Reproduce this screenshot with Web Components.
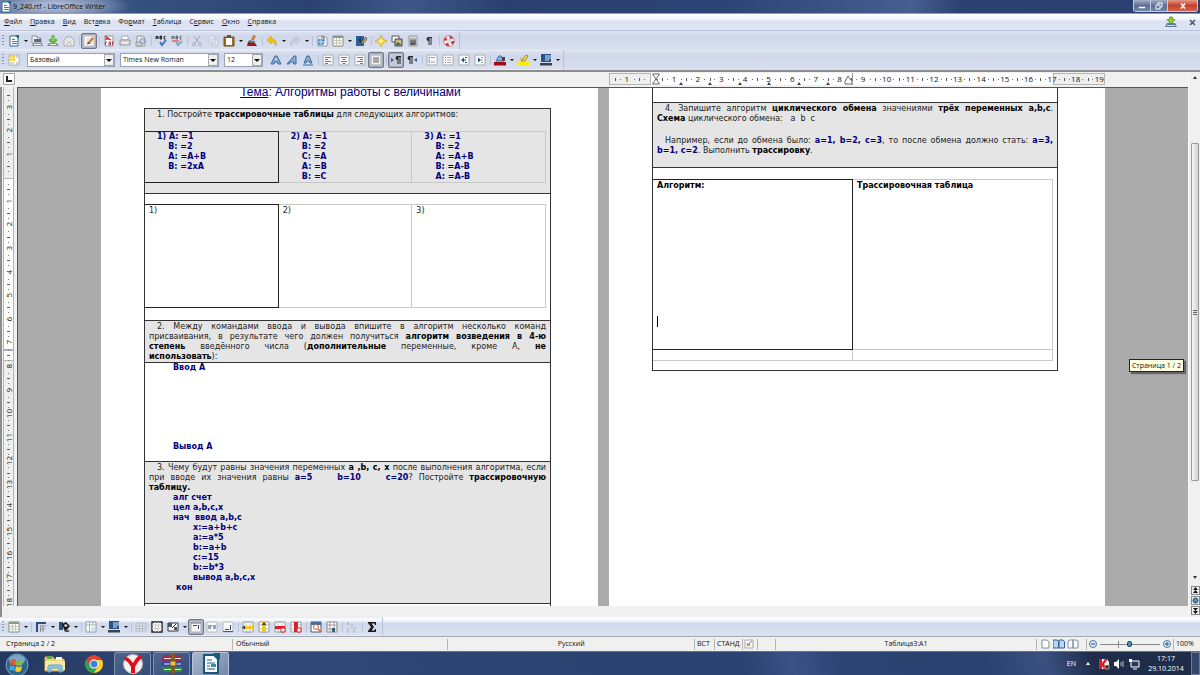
<!DOCTYPE html>
<html lang="ru">
<head>
<meta charset="utf-8">
<title>9_240.rtf - LibreOffice Writer</title>
<style>
html, body { margin: 0; height: 100%; overflow: hidden; }
body { font: 7px/10px "Open Sans", "Noto Sans", sans-serif; color: #111; }
</style>
</head>
<body>
<writer-app></writer-app>
<script>
const ICONS = {
  doc: '<path d="M2 1h6l2 2v8H2z" fill="#fff" stroke="#2f6c93"/><path d="M7 0h4v4z" fill="#1f6f9a"/><path d="M4 4h3v1H4zM4 6h5v1H4zM4 8h5v1H4z" fill="#3b7ea6"/>',
  open: '<path d="M1 1h5v2h4v5H1z" fill="#f4f4f4" stroke="#8b93a1"/><path d="M3 4h7v3H3z" fill="#5f6a7c"/><path d="M2 8h9l1 3H1z" fill="#8b93a1"/><path d="M3 9.500h7" stroke="#fff"/>',
  save: '<path d="M2 8h8l2 3H0z" fill="#8d939c"/><path d="M3 9.500h6" stroke="#eee"/><path d="M5 0h2l1 4h2v2L6 9 2 6V4h2z" fill="#58b832"/><path d="M5.500 2h1l.5 4H5z" fill="#a4e072"/>',
  mail: '<path d="M1 5l3-3h4l3 3v6H1z" fill="#eee" stroke="#aaa"/><path d="M3 10l3-3 3 3" fill="none" stroke="#b5b5b5"/><path d="M4 5h4v2H4z" fill="#fff" stroke="#bbb" stroke-width=".6"/>',
  edit: '<path d="M1 1h10v10H1z" fill="#fff" stroke="#bbb"/><path d="M3 4h4M3 6h3M3 8h6" stroke="#ccc"/><path d="M5 7l4-5 2 1.500-4 5z" fill="#f07c1c"/><path d="M4 9.500l1-2.500 2 1.500z" fill="#333"/>',
  pdf: '<path d="M2 1h8v10H2z" fill="#fff" stroke="#999"/><path d="M2 1l6 4M2 4h4" stroke="#c9302c" stroke-width="1.500"/><path d="M2.500 10V7H4M6 7v3h1.500V7zM9.500 10V7H11" stroke="#944" fill="none"/>',
  print: '<path d="M3 1h6v4H3z" fill="#fff" stroke="#aaa"/><path d="M1 5h10v5H1z" fill="#d8d8d8" stroke="#999"/><path d="M3 8h6" stroke="#fff"/>',
  preview: '<path d="M2 1h6l2 2v8H2z" fill="#e8e8e8" stroke="#999"/><path d="M1 7h6v4H1z" fill="#d0d0d0" stroke="#999"/><circle cx="7.500" cy="6" r="2.500" fill="#bfd6ea" stroke="#7a93ad"/>',
  abc: '<path d="M1 4V1.500h2V4M1 3h2M5 4V1h1.500v3zM5 2.500h1.500M10.500 1.500H9V4h1.500" stroke="#222" fill="none"/><path d="M5 7l2 3 4-5" stroke="#3d76b8" stroke-width="2" fill="none"/>',
  abc2: '<path d="M1 4V1.500h2V4M1 3h2M5 4V1h1.500v3zM5 2.500h1.500M10.500 1.500H9V4h1.500" stroke="#666" fill="none"/><path d="M1 6h7" stroke="#d66" stroke-width="1.500"/><path d="M5 7l2 3 4-4" stroke="#7fa5d0" stroke-width="2" fill="none"/>',
  cut: '<path d="M3 1l5 7M9 1L4 8" stroke="#a3a9b8" fill="none"/><circle cx="3" cy="9.500" r="1.500" fill="none" stroke="#a3a9b8"/><circle cx="9" cy="9.500" r="1.500" fill="none" stroke="#a3a9b8"/>',
  copy: '<path d="M2 1h6v8H2zM5 4h6v7H5z" fill="#e4e6ee" stroke="#c3c7d4"/>',
  paste: '<path d="M1 2h10v9H1z" fill="#a86f1b" stroke="#7a4e12"/><path d="M3 3h6v7H3z" fill="#fff"/><path d="M4 0h4v3H4z" fill="#555"/>',
  brush: '<path d="M7 0l3 1-2 4H5z" fill="#c97a45"/><path d="M3 5l6 1v2L2 7z" fill="#777"/><path d="M2 7l7 1 2 3H1z" fill="#333"/><path d="M2 9.500h8" stroke="#b22"/>',
  undo: '<path d="M1 5l4-4v2.500c4 0 6 3 5 7.500C9 8 8 7 5 7v2z" fill="#f3c512" stroke="#c99c10" stroke-width=".6"/>',
  redo: '<path d="M11 5L7 1v2.500C3 3.500 1 6.500 2 11 3 8 4 7 7 7v2z" fill="#c9cedb" stroke="#b4bac9" stroke-width=".6"/>',
  link: '<path d="M2 1h6l3 2v8H2z" fill="#fff" stroke="#9a9a9a"/><circle cx="5" cy="7" r="3.500" fill="#5b8fc4"/><path d="M2 7h6M5 4v6" stroke="#cfe2f5"/><path d="M5 2h3v4" stroke="#2f5f93" fill="none"/>',
  table: '<path d="M1 1h10v10H1z" fill="#fff" stroke="#8b8b7c"/><path d="M1 1h10v2H1z" fill="#8f968c"/><path d="M1 5.500h10M1 8h10M4.500 3v8M7.500 3v8" stroke="#c4c8b8"/>',
  draw: '<path d="M1 1h8v10H1z" fill="#2f5f93"/><path d="M3 5l3-3v6z" fill="#1b3958"/><path d="M6 8l5-6 1 2-4 5z" fill="#d7a45a" stroke="#333" stroke-width=".6"/>',
  star: '<path d="M6 0l2 4 4 2-4 2-2 4-2-4-4-2 4-2z" fill="#f5d23a" stroke="#c9a21c" stroke-width=".6"/><path d="M6 3l1 2 2 1-2 1-1 2-1-2-2-1 2-1z" fill="#fff6b5"/>',
  gallery: '<path d="M1 1h7v6H1z" fill="#fff" stroke="#555"/><path d="M4 4h7v7H4z" fill="#c9b68a" stroke="#444"/><path d="M5 9l2-2 3 3H5z" fill="#3c6b3a"/>',
  db: '<path d="M2 1h8v10H2z" fill="#ddd" stroke="#999"/><path d="M3 4h6v5H3z" fill="#777"/><ellipse cx="6" cy="4" rx="3" ry="1.300" fill="#aaa"/><ellipse cx="6" cy="9" rx="3" ry="1.200" fill="#555"/>',
  para: '<path d="M5.500 2H9v1h-.5v7h-1V3h-1v7h-1V6C3 6 3 2 5.500 2z" fill="#2b2b3c"/>',
  help: '<circle cx="6" cy="6" r="4" fill="none" stroke="#fff" stroke-width="2.500"/><circle cx="6" cy="6" r="4" fill="none" stroke="#d2332b" stroke-width="2.500" stroke-dasharray="3.140 3.140"/><circle cx="6" cy="6" r="5.300" fill="none" stroke="#a3473f" stroke-width=".6"/>',
  styles: '<path d="M1 1h10v10H1z" fill="#fff" stroke="#aaa"/><path d="M1 1h6v6H1z" fill="#f2cf2c"/><path d="M8 1h3v3H8zM8 8h3v3H8zM1 8h5v3H1z" fill="#cdcdcd"/><path d="M1 4h10M4 1v10M7.500 1v10M1 7.500h10" stroke="#fff" stroke-width=".6"/>',
  bold: '<path d="M1 10L5 2h2l4 8H8L7.500 8h-3L4 10z" fill="#86aed8" stroke="#38689c"/><path d="M5 6h2L6 4z" fill="#fff"/>',
  ital: '<path d="M1 10L8 2h2v8H7.500V8h-3L3 10z" fill="#86aed8" stroke="#38689c"/>',
  under: '<path d="M2 9l3-7h2l3 7H8L7 7H5L4 9z" fill="#86aed8" stroke="#38689c"/><path d="M1 11h10" stroke="#38689c"/>',
  al: '<path d="M1 1h10v10H1z" fill="#fafafa" stroke="#aaa"/><path d="M3 3.500h6M3 5.500h3M3 7.500h6M3 9.500h3" stroke="#777"/>',
  ac: '<path d="M1 1h10v10H1z" fill="#fafafa" stroke="#aaa"/><path d="M3 3.500h6M4.500 5.500h3M3 7.500h6M4.500 9.500h3" stroke="#777"/>',
  ar: '<path d="M1 1h10v10H1z" fill="#fafafa" stroke="#aaa"/><path d="M3 3.500h6M6 5.500h3M3 7.500h6M6 9.500h3" stroke="#777"/>',
  aj: '<path d="M1 1h10v10H1z" fill="#f0f0f0" stroke="#aaa"/><path d="M3 3h6v6H3z" fill="#a9a9a9"/>',
  ltr: '<path d="M1 4l3 2-3 2z" fill="#2f5f93"/><path d="M7.500 2h3.500v1h-.5v7h-1V3h-1v7h-1V6C5 6 5 2 7.500 2z" fill="#222"/>',
  rtl: '<path d="M11 4L8 6l3 2z" fill="#2f5f93"/><path d="M3.500 2H7v1h-.5v7h-1V3h-1v7h-1V6C1 6 1 2 3.500 2z" fill="#222"/>',
  num: '<path d="M1 1h10v10H1z" fill="#fafafa" stroke="#aaa"/><path d="M5 3.500h4M5 8h4" stroke="#999"/><path d="M2.500 3.500h1.500M2.500 6h1.500M2.500 8h1.500" stroke="#2f6fb0"/>',
  bul: '<path d="M1 1h10v10H1z" fill="#fafafa" stroke="#aaa"/><path d="M5 3.500h4M5 6h4M5 8.500h4" stroke="#999" stroke-width=".8"/><path d="M3 3.500h1M3 6h1M3 8.500h1" stroke="#777"/>',
  outd: '<path d="M1 1h10v10H1z" fill="#fafafa" stroke="#aaa"/><path d="M3 6l3-2.500v5z" fill="#1e4f86"/><path d="M6 6h2M7 3.500h2M7 8.500h2" stroke="#1e4f86"/>',
  ind: '<path d="M1 1h10v10H1z" fill="#fafafa" stroke="#aaa"/><path d="M7 6L4 3.500v5z" fill="#1e4f86"/><path d="M7 3.500h2M7 6h2M7 8.500h2" stroke="#999"/>',
  fcol: '<path d="M2 7l3-5h2l3 5z" fill="#86aed8" stroke="#38689c"/><path d="M8 3h3v4H8z" fill="#444"/><path d="M0 8h12v3.500H0z" fill="#a30c14"/>',
  hcol: '<path d="M4 7l5-6 2 1-3 5z" fill="#f3d35e" stroke="#8a7322" stroke-width=".7"/><path d="M3 4l5 3" stroke="#c99c10"/><path d="M0 8h12v3.500H0z" fill="#f7ee00"/>',
  bcol: '<path d="M1 0h10v8H1z" fill="#24558a"/><path d="M5 2h6M5 4h6M5 6h4" stroke="#dfe7f2"/><path d="M0 9h12v2.500H0z" fill="#3b4148"/>',
  brd: '<path d="M1 1h10v2H3v8H1z" fill="#2a4f7c"/><path d="M5 5h6M5 8h5M5.500 5v6M8 5v6" stroke="#8a8f99"/>',
  fill: '<path d="M1 1h4v8H1z" fill="#2a4f7c"/><path d="M4 3l4-2 4 4-5 6z" fill="#1c1c1c"/><path d="M6 4l2-1 2 2-3 1z" fill="#d7d7d7"/><path d="M7 9h4v2H7z" fill="#555"/>',
  merge: '<path d="M1 1h10v10H1z" fill="#fff" stroke="#8f9db0"/><path d="M1 4h10M4.500 1v10M8 1v3" stroke="#9fb6a2"/><path d="M6 6h4v4H6z" fill="#cfe0ef"/>',
  split: '<path d="M1 2h10v8H1z" fill="#dfe2ea" stroke="#b6bbc8"/><path d="M1 5h10M1 7.500h10M4.500 2v8M7.500 2v8" stroke="#b6bbc8"/>',
  opt: '<path d="M1 1h10v10H1z" fill="#fff" stroke="#222" stroke-width="1.400"/><path d="M1 4h10M1 7.500h10M4.500 1v10M7.500 1v10" stroke="#ccc"/>',
  opt2: '<path d="M1 2h10v8H1z" fill="#fff" stroke="#333"/><path d="M1 2h4v4H1zM7 6h3v3H7z" fill="#44546c"/><path d="M5 7l4-4" stroke="#222"/>',
  top: '<path d="M1 1h10v10H1z" fill="#fafafa" stroke="#aaa"/><path d="M1 2h10" stroke="#667"/><path d="M3 4.500h4M8.500 4v4" stroke="#2a4f7c"/>',
  mid: '<path d="M1 1h10v10H1z" fill="#fafafa" stroke="#bbb"/><path d="M2 5h4M2 7h3M7 5h3M7 7h3" stroke="#2a4f7c"/>',
  bot: '<path d="M1 1h10v10H1z" fill="#fafafa" stroke="#bbb"/><path d="M3 8.500h4M8.500 4v5" stroke="#2a4f7c"/><path d="M1 10.500h10" stroke="#556"/>',
  irow: '<path d="M1 1h10v10H1z" fill="#fff" stroke="#999"/><path d="M4 1v10M8 1v10" stroke="#bbb"/><path d="M1 5h10v3H1z" fill="#f2cb1c"/><path d="M0 6.500l3-2v4z" fill="#333"/>',
  icol: '<path d="M1 1h10v10H1z" fill="#fff" stroke="#999"/><path d="M1 4h10M1 8h10" stroke="#bbb"/><path d="M4 1h4v10H4z" fill="#f2cb1c"/><path d="M6 1l2 3H4z" fill="#333"/>',
  drow: '<path d="M1 1h10v10H1z" fill="#fff" stroke="#999"/><path d="M4 1v10M8 1v10" stroke="#bbb"/><path d="M1 5h10v3H1z" fill="#d8202c"/><path d="M7 7h4v4H7z" fill="#fff" stroke="#d8202c"/>',
  dcol: '<path d="M1 1h10v10H1z" fill="#fff" stroke="#999"/><path d="M1 4h10M1 8h10" stroke="#bbb"/><path d="M4 1h4v10H4z" fill="#d8202c"/><path d="M7 7h4v4H7z" fill="#fff" stroke="#d8202c"/>',
  auto: '<path d="M1 1h10v10H1z" fill="#fff" stroke="#557"/><path d="M1 1h10v3H1z" fill="#3c6ea3"/><circle cx="6" cy="6" r="2.500" fill="#fff" stroke="#d2622c"/><path d="M8 8l3 3" stroke="#d2622c" stroke-width="1.500"/>',
  props: '<path d="M1 1h10v10H1z" fill="#fff" stroke="#888"/><path d="M1 4h10M1 8h10M4 1v10M8 1v6" stroke="#999"/><path d="M6 7h3v4H6z" fill="#3d5f7e"/>',
  sort: '<path d="M1 4l1-3 1 3M1 8h2l-2 3h2M7 7h3l-3 4h3M4 3h2v4" stroke="#b3b8c6" fill="none"/>',
  sum: '<path d="M2 1h8v3H9l-.5-1.500h-3L8 6 5.500 9.500h3L9 8h1v3H2v-1l3-4-3-4z" fill="#1b1b1b"/>',
  update: '<path d="M2 7h8l2 4H0z" fill="#5c7f9a"/><path d="M2 9.500h8" stroke="#cfdfe8"/><path d="M4.500 1h3v2.500H10L6 8 2 3.500h2.500z" fill="#8fd02a" stroke="#4a8a15" stroke-width=".7"/>',
  page1: '<path d="M3 2h5l2 2v6H3z" fill="#fff" stroke="#7b8ea3"/>',
  page2: '<path d="M0 2h4l1.500 1.500V10H0zM6 2h4l1.500 1.500V10H6z" fill="#bcd5ee" stroke="#2f6099"/>',
  book: '<path d="M1 3l2-1h3v8H1zM6 2h3l2 1v7H6z" fill="#fff" stroke="#7b8ea3"/>',
  minus: '<circle cx="6" cy="6" r="3.500" fill="#dfeaf5" stroke="#4d7ba5"/><path d="M4 6h4" stroke="#24557f"/>',
  plus: '<circle cx="6" cy="6" r="3.500" fill="#dfeaf5" stroke="#4d7ba5"/><path d="M4 6h4M6 4v4" stroke="#24557f"/>',
  sig: '<path d="M2 2h8v8H2z" fill="#f6f6f6" stroke="#a9a9a9"/><path d="M4 5h3v3H4z" fill="#ec8a5e"/><path d="M6 6l3-3" stroke="#888"/>',
  kasp: '<path d="M1 1h8l2 3v7H1z" fill="#f3f3f3"/><path d="M1 1h3v4l3-4h3L6 6l4 5H6L4 8v3H1z" fill="#d61f26"/><path d="M7 7h4v4H7z" fill="#333" stroke="#ddd" stroke-width=".6"/>',
  sound: '<path d="M1 4h2l3-3v10L3 8H1z" fill="#fff"/><path d="M8 4v4M10 3v6" stroke="#d9dfeb" stroke-width=".8"/>',
  net: '<path d="M3 3h8v6H3z" fill="#2b3a5c" stroke="#fff"/><path d="M5 11h4" stroke="#fff"/><path d="M1 1h3v3H1z" fill="#fff"/>'
};

function define(name, css, html) {
  const t = document.createElement('template');
  t.innerHTML = '<style>*{box-sizing:border-box}' + css + '</style>' + html;
  customElements.define(name, class extends HTMLElement {
    constructor() { super(); this.attachShadow({ mode: 'open' }); }
    connectedCallback() {
      if (this.shadowRoot.childNodes.length) return;
      this.shadowRoot.append(t.content.cloneNode(true));
      if (this.setup) this.setup();
    }
    get setup() { return SETUP[name]; }
  });
}
const svg = (name, size = 12) => `<svg viewBox="0 0 12 12" width="${size}" height="${size}" aria-hidden="true">${ICONS[name]}</svg>`;
const SETUP = {
  'tool-button'() {
    const b = this.shadowRoot.querySelector('button');
    b.innerHTML = svg(this.getAttribute('icon'));
    b.setAttribute('aria-label', this.getAttribute('icon'));
    if (this.hasAttribute('on')) b.setAttribute('aria-pressed', 'true');
  },
  'combo-box'() {
    const s = this.shadowRoot.querySelector('select');
    s.setAttribute('aria-label', this.getAttribute('label'));
    s.innerHTML = `<option>${this.getAttribute('value')}</option>`;
  },
  'column-ruler'() {
    const o = this.shadowRoot.querySelector('.scale');
    for (let i = -1; i <= 19; i++) o.insertAdjacentHTML('beforeend', `<span>${i ? Math.abs(i) : ''}</span>`);
  },
  'row-ruler'() {
    const o = this.shadowRoot.querySelector('.scale');
    for (let i = -3; i <= 18; i++) o.insertAdjacentHTML('beforeend', `<span><b>${i ? Math.abs(i) : ''}</b></span>`);
  },
  'svg-icon'() { this.shadowRoot.querySelector('i').innerHTML = svg(this.getAttribute('name')); }
};

define('svg-icon', ':host{display:inline-flex;flex:none} i,svg{display:block}', '<i></i>');

define('tool-button', `
:host{display:block;flex:none;width:16px;height:16px}
button{display:grid;place-items:center;width:16px;height:16px;padding:0;border:1px solid transparent;border-radius:2px;background:none}
button[aria-pressed]{border-color:#6f7788;background:#c3c9d8;box-shadow:inset 0 0 0 1px #a7adbd}
svg{display:block}`, '<button type="button"></button>');

define('drop-arrow', `
:host{display:block;flex:none;width:7px}
button{display:grid;place-items:center;width:7px;height:16px;border:0;padding:0;background:none}
i{border:2px solid transparent;border-top-color:#111;border-bottom:0}`, '<button type="button" aria-label="Ещё"><i></i></button>');

define('bar-gap', ':host{display:grid;place-items:center;flex:none;width:4px;height:16px} i{width:1px;height:10px;background:#bcc3d6}', '<i></i>');

define('tool-bar', `
:host{display:flex;background:linear-gradient(#dde3f2,#cfd7ea 30%,#d9e0f0)}
:host(.end){background:linear-gradient(#fff,#f1f4fb 20%,#cfd7ea 35%,#dce3f2)}
div{display:flex;align-items:center;height:100%;padding-right:2px;border:1px solid #e6ebf6;border-left:0;border-right-color:#b9c1d4}
.grip{width:2px;height:12px;margin:0 2px;background:repeating-linear-gradient(#8d94a6 0 1px,transparent 1px 3px)}`,
'<div role="toolbar"><span class="grip"></span><slot></slot></div>');

define('combo-box', `
:host{display:block;flex:none;position:relative;height:14px}
select{appearance:none;width:100%;height:14px;padding:0 14px 0 2px;border:1px solid #9aa3b5;border-radius:0;background:#fff;font:inherit;color:#111}
i{position:absolute;right:1px;top:1px;width:10px;height:12px;border:1px solid #aaa;background:#eee;display:grid;place-items:center;pointer-events:none}
i::after{content:"";border:3px solid transparent;border-top-color:#111;border-bottom:0}`,
'<select></select><i></i>');

define('title-bar', `
:host{display:flex;align-items:center;height:14px;padding-left:0;gap:1px;border-bottom:1px solid #8f9db8;
 background:radial-gradient(ellipse 76px 16px at 54px 6px,#a9b6cf 20%,#7488ad 65%,transparent 100%),linear-gradient(100deg,#5a71a0,#34507f 12%,#2b4272 26%,#3d5788 34%,#2a4070 42%,#2c4475 60%,#465e90 76%,#2b4171 80%,#2a4070)}
h1{flex:1;margin:0;font:inherit;color:#0c0c14}
nav{display:flex;align-self:flex-start;margin-right:2px;border:1px solid #c3ccdd;border-top:0;border-radius:0 0 3px 3px;overflow:hidden}
button{display:grid;place-items:center;height:11px;width:17px;padding:0;border:0;border-right:1px solid #c3ccdd;background:linear-gradient(#a2aec5,#5d6f94 50%,#7485a8)}
.x{width:29px;border:0;background:linear-gradient(#e39a86,#c6402a 50%,#d4664c)}`,
`<svg-icon name="doc"></svg-icon><h1>9_240.rtf - LibreOffice Writer</h1>
<nav><button aria-label="Свернуть"><svg width="8" height="8"><path d="M1 5h6v1H1z" fill="#fff" stroke="#fff" stroke-width=".5"/></svg></button>
<button aria-label="Восстановить"><svg width="8" height="8"><path d="M1 3h4v4H1zM3 2.500V1h4v4H5.500" fill="none" stroke="#fff"/></svg></button>
<button class="x" aria-label="Закрыть"><svg width="8" height="8"><path d="M2 1.500l4 5M6 1.500l-4 5" stroke="#fff" stroke-width="1.500"/></svg></button></nav>`);

define('menu-bar', `
:host{display:flex;align-items:center;height:17px;border-bottom:1px solid #b9c3da;background:linear-gradient(#fff,#f3f6fc 30%,#dbe2f1 45%,#dfe5f3)}
nav{display:flex;flex:1;gap:8px;padding:0 0 0 4px}
a{color:#15151c;text-decoration:none} u{text-underline-offset:1px;text-decoration-thickness:1px}
button{display:grid;place-items:center;width:13px;height:13px;padding:0;margin:0 1px 0 9px;border:0;background:none}`,
`<nav><a href="#"><u>Ф</u>айл</a><a href="#"><u>П</u>равка</a><a href="#"><u>В</u>ид</a><a href="#">Вст<u>а</u>вка</a><a href="#">Фо<u>р</u>мат</a><a href="#"><u>Т</u>аблица</a><a href="#">С<u>е</u>рвис</a><a href="#"><u>О</u>кно</a><a href="#"><u>С</u>правка</a></nav>
<svg-icon name="update"></svg-icon>
<button aria-label="Закрыть документ"><svg width="7" height="7"><path d="M1 1l5 5M6 1L1 6" stroke="#4c5468" stroke-width="1.500"/></svg></button>`);

define('column-ruler', `
:host{display:block;position:relative;height:12px;overflow:hidden;background:#fff;font-size:8px}
.m{position:absolute;top:0;bottom:0;border:1px solid #b5b5b5;background:#efefef}
.scale{position:relative;display:flex;height:12px;margin:0 -6px 0 6px}
span{flex:1 1 0;min-width:0;text-align:center;line-height:12px;color:#111;
 background:linear-gradient(#555,#555) 0 50%/1px 3px no-repeat,linear-gradient(#777,#777) 22% 50%/1px 1px no-repeat,linear-gradient(#777,#777) 82% 50%/1px 1px no-repeat}
svg{position:absolute;left:0;top:0}`,
`<div class="m" style="left:0;width:42px"></div><div class="m" style="right:0;width:52px"></div><div class="scale"></div>
<svg width="260" height="12" aria-hidden="true"><path d="M43.500 1h7l-3.500 5zM43.500 11h7L47 6z" fill="#fff" stroke="#666"/><path d="M236 11h7V8.500L239 3l-3 5.500z" fill="#fff" stroke="#666"/><path d="M243.500 0v12" stroke="#999"/>
<path d="M70 12l2-3 2 3zM99 12l2-3 2 3zM129 12l2-3 2 3zM158 12l2-3 2 3zM188 12l2-3 2 3zM217 12l2-3 2 3z" fill="#444"/></svg>`);

define('row-ruler', `
:host{display:block;overflow:hidden;border-left:2px solid #8d8d8d;border-right:1px solid #555;background:#f0f0f0;font-size:8px}
.strip{height:100%;margin:0 3px 0 1px;border:1px solid #b5b5b5;border-width:0 1px;background:linear-gradient(#efefef 91px,#b5b5b5 91px 92px,#fff 92px 262px,#aaa 262px 264px,#fff 264px 273px,#b5b5b5 273px 274px,#efefef 274px)}
.scale{display:flex;flex-direction:column;height:100%;position:relative;top:8px}
span{flex:1 1 0;min-height:0;display:grid;place-items:center;
 background:linear-gradient(#555,#555) 50% 0/3px 1px no-repeat,linear-gradient(#777,#777) 50% 22%/1px 1px no-repeat,linear-gradient(#777,#777) 50% 82%/1px 1px no-repeat}
b{font-weight:400;writing-mode:vertical-rl;transform:rotate(180deg);line-height:10px;color:#111}`,
'<div class="strip"><div class="scale"></div></div>');

const DOC = `
:host{display:block;min-width:0;background:#fff;padding:0 47px 0 43px;font:8px/10px "DejaVu Sans",Verdana,sans-serif;color:#222;overflow:hidden}
table{border-collapse:collapse;table-layout:fixed;width:100%}
td{padding:0;vertical-align:top;border:1px solid #333}
p{margin:0;padding:0 4px;white-space:pre-wrap}
p.j{text-align:justify;text-align-last:justify;white-space:nowrap}
p.i{padding-left:12px}
b{color:#000} .n,.n b{color:#00007c}
.g{background:#e5e5e5;padding-top:1px}
.in{width:calc(100% - 3px);margin-left:-1px}
.in td{border-color:#c8c8c8} .in td.d{border:1px solid #222}
.in.w td{padding-top:1px}`;

define('page-one', DOC + `
h2{margin:-3px 0 0;padding-left:6px;font:12px/14px "Liberation Sans",Arial,sans-serif;color:#00007c;text-align:center}
table.o{margin-top:9px} .in.n td{padding-left:12px} .in.n p{padding:0}
.sp{height:11px} .sp.s{height:10px} .sp.l{height:12px}`,
`<h2><u>Тема</u>: Алгоритмы работы с величинами</h2>
<table class="o"><tbody>
<tr><td class="g"><p class="i">1. Постройте <b>трассировочные таблицы</b> для следующих алгоритмов:</p><div class="sp"></div>
<table class="in n"><tr style="height:51px"><td class="d"><p><b>1) A: =1
    B: =2
    A: =A+B
    B: =2xA</b></p></td><td><p><b>2) A: =1
    B: =2
    C: =A
    A: =B
    B: =C</b></p></td><td><p><b>3) A: =1
    B: =2
    A: =A+B
    B: =A-B
    A: =A-B</b></p></td></tr></table><div class="sp s"></div></td></tr>
<tr><td><div class="sp s"></div><table class="in w"><tr style="height:103px"><td class="d"><p>1)</p></td><td><p>2)</p></td><td><p>3)</p></td></tr></table><div class="sp l"></div></td></tr>
<tr><td class="g"><p class="j i">2. Между командами ввода и вывода впишите в алгоритм несколько команд</p><p class="j">присваивания, в результате чего должен получиться <b>алгоритм возведения в 4-ю</b></p><p class="j"><b>степень</b> введённого числа (<b>дополнительные</b> переменные, кроме А, <b>не</b></p><p><b>использовать</b>):</p></td></tr>
<tr style="height:99px"><td class="n"><p style="padding:0 28px"><b>Ввод А</b></p><p style="padding:69px 28px 0"><b>Вывод А</b></p></td></tr>
<tr style="height:142px"><td class="g"><p class="j i">3. Чему будут равны значения переменных <b>a ,b, c, x</b> после выполнения алгоритма, если</p><p class="j">при вводе их значения равны <b class="n">a=5&nbsp; &nbsp; b=10&nbsp; &nbsp; c=20</b>? Постройте <b>трассировочную</b></p><p><b>таблицу.</b></p><p class="n" style="padding-left:28px"><b>алг счет
цел a,b,c,x
нач  ввод a,b,c</b></p><p class="n" style="padding-left:48px"><b>x:=a+b+c
a:=a*5
b:=a+b
c:=15
b:=b*3
вывод a,b,c,x</b></p><p class="n" style="padding-left:31px"><b>кон</b></p></td></tr>
<tr style="height:20px"><td></td></tr></tbody></table>`);

define('page-two', DOC + `
.first{height:14px} .caret{display:block;width:1px;height:11px;margin:125px 0 0 4px;background:#000}`,
`<table><tbody><tr class="first"><td style="border-top:0"></td></tr>
<tr style="height:65px"><td class="g"><p class="j i">4. Запишите алгоритм <b>циклического обмена</b> значениями <b>трёх переменных a,b,c</b>.</p><p><b>Схема</b> циклического обмена:   a  b  c</p><p>&nbsp;</p><p class="j i" style="padding-top:2px">Например, если до обмена было: <b class="n">a=1, b=2, c=3</b>, то после обмена должно стать: <b class="n">a=3,</b></p><p><b class="n">b=1, c=2</b>. Выполнить <b>трассировку</b>.</p></td></tr>
<tr style="height:203px"><td><div style="height:11px"></div><table class="in w"><tr style="height:170px"><td class="d"><p><b>Алгоритм:</b></p><span class="caret"></span></td><td><p><b>Трассировочная таблица</b></p></td></tr><tr style="height:11px"><td></td><td></td></tr></table></td></tr></tbody></table>`);

define('scroll-bar', `
:host{display:flex;flex-direction:column;align-items:center;width:12px;padding:4px 1px 2px 2px;background:#f0f0f0;border-left:1px solid #fafafa}
i{border:2px solid transparent;border-bottom:3px solid #333;border-top:0}
i.dn{border-bottom:0;border-top:3px solid #333;margin-bottom:6px}
.track{flex:1;display:flex;flex-direction:column;align-self:stretch;padding:64px 0 95px}
.thumb{flex:1;display:grid;place-items:center;border:1px solid #9b9b9b;border-radius:1px;background:linear-gradient(90deg,#f6f6f6,#d2d2d6)}
.thumb::after{content:"";width:4px;height:5px;background:repeating-linear-gradient(#666 0 1px,transparent 1px 2px)}
button{display:grid;place-items:center;width:9px;height:9px;margin-top:1px;padding:0;border:1px solid #888;background:#eee}`,
`<i></i><div class="track"><div class="thumb"></div></div><i class="dn"></i>
<button aria-label="Назад"><svg width="7" height="7"><path d="M3.500 0L6 3H1zM3.500 3L6 6H1z" fill="#111"/></svg></button>
<button aria-label="Навигация"><svg width="7" height="7"><circle cx="3.500" cy="3.500" r="2.500" fill="#4e8fb8" stroke="#234f6d"/></svg></button>
<button aria-label="Вперёд"><svg width="7" height="7"><path d="M3.500 4L6 1H1zM3.500 7L6 4H1z" fill="#111"/></svg></button>`);

define('doc-view', `
:host{--cols:83fr 497fr 11fr 496fr 83fr;flex:1;min-height:0;display:flex;border-top:2px solid #8d8d8d;position:relative}
.main{flex:1;min-width:0;display:flex;flex-direction:column}
.top{display:grid;grid-template-columns:18px 1fr;height:15px;background:#f0f0f0}
.corner{display:grid;place-items:center;width:12px;height:12px;margin:1px 3px;border:1px solid #aaa;background:#fff}
.corner::after{content:"";width:4px;height:4px;border:solid #222;border-width:0 0 2px 2px}
.cols{display:grid;grid-template-columns:var(--cols)}
column-ruler{grid-column:4;margin-top:1px}
.work{flex:1;min-height:0;display:grid;grid-template-columns:18px 1fr;grid-template-rows:minmax(0,1fr)}
.sheet{background:#ababab;border-top:1px solid #555;grid-template-rows:minmax(0,1fr);overflow:hidden}
page-one{grid-column:2} page-two{grid-column:4}
.foot{height:11px;background:#f0f0f0;border-left:2px solid #8d8d8d}
.tip{position:absolute;right:16px;top:287px;padding:0 2px;height:13px;line-height:11px;border:1px solid #222;background:#ffffe1;box-shadow:2px 2px 1px #0006}`,
`<div class="main"><div class="top"><span class="corner"></span><div class="cols"><column-ruler></column-ruler></div></div>
<div class="work"><row-ruler></row-ruler><div class="cols sheet"><page-one></page-one><page-two></page-two></div></div><div class="foot"></div></div>
<scroll-bar></scroll-bar><span class="tip" role="tooltip">Страница 1 / 2</span>`);

define('status-bar', `
:host{display:flex;align-items:center;height:15px;border-top:1px solid #a3a9b5;background:#f0f0ee}
div{display:flex;align-items:center;height:11px;min-width:0;border-left:1px solid #b3b3b3;padding:0 3px;white-space:nowrap;overflow:hidden}
div:first-of-type{border:0;padding-left:6px} .c{justify-content:center} .f{flex:none;padding:0 2px}
input{appearance:none;width:60px;height:11px;margin:0 1px;background:linear-gradient(#888,#888) 50% 50%/100% 1px no-repeat,linear-gradient(#888,#888) 18px 50%/1px 7px no-repeat}
input::-webkit-slider-thumb{appearance:none;width:5px;height:6px;border-radius:2px;border:1px solid #234f6d;background:#4e8fb8}`,
`<div style="flex:230">Страница 2 / 2</div><div style="flex:215">Обычный</div><div class="c" style="flex:247">Русский</div><div class="f" style="width:20px">ВСТ</div><div class="f" style="width:28px">СТАНД</div><div class="f" style="width:15px;padding:0"><svg-icon name="sig"></svg-icon></div><div class="f" style="width:18px"></div><div class="c" style="flex:262">Таблица3:А1</div>
<div class="f" style="width:50px;gap:2px"><svg-icon name="page1"></svg-icon><svg-icon name="page2"></svg-icon><svg-icon name="book"></svg-icon></div>
<div class="f" style="width:87px;padding:0"><svg-icon name="minus"></svg-icon><input type="range" aria-label="Масштаб" value="49"><svg-icon name="plus"></svg-icon></div><div class="f" style="width:27px">100%</div>`);

define('task-bar', `
:host{display:flex;align-items:center;height:24px;border-top:1px solid #5d7096;color:#fff;background:linear-gradient(75deg,#24385f,#30497a 16%,#2a4370 50%,#2a4370 62%,#3a5286 66%,#2c4473 70%,#2a4270 82%,#3b5080 87%,#1f2d4b 91%,#1f2d4b)}
nav{display:flex;flex:1;gap:2px}
button{display:grid;place-items:center;width:37px;height:24px;padding:0;border:1px solid transparent;border-radius:2px;background:none}
.on{border-color:#8090b2;background:linear-gradient(135deg,#8494b566,#3c52807a)} .act{border-color:#b9c4d8;background:linear-gradient(135deg,#a9b6cc,#7488ab)}
.tray{display:flex;align-items:center;gap:3px} time{width:44px;margin-left:1px;text-align:center;line-height:10px}
.up{border:2px solid transparent;border-bottom:3px solid #fff;border-top:0;margin:0 5px 0 7px}
.desk{width:9px;height:23px;border:1px solid #6b7a99;background:#33456b}`,
`<nav><button aria-label="Пуск" style="width:34px"><svg width="24" height="24"><circle cx="12" cy="12" r="11" fill="#2d6590" stroke="#78a9cc"/><ellipse cx="12" cy="7" rx="8" ry="5" fill="#9cc3dc" opacity=".7"/><path d="M6 7q3-2 5 0l-1 5q-3-1-5 0z" fill="#e8552a"/><path d="M12 7q3 2 6 0l-1 5q-3 2-6 0z" fill="#7ebf3a"/><path d="M5 13q2-1 5 0l-1 5q-2-2-5 0z" fill="#45a6e0"/><path d="M11 13q3 2 6 0l-1 5q-3 2-6 0z" fill="#f6c927"/></svg></button>
<button aria-label="Проводник"><svg width="22" height="20"><path d="M1 3h8l1 2h10v12H1z" fill="#efd67b" stroke="#c9a94a"/><path d="M3 2h5v3H3z" fill="#58a848"/><path d="M12 3h6v3h-6z" fill="#f6f6f6"/><path d="M1 7h20v9H1z" fill="#f7e8a5"/><path d="M4 18v-5q0-2 2-2h10q2 0 2 2v5h-3v-4H7v4z" fill="#8ec8e8" stroke="#5b9fc8"/></svg></button>
<button aria-label="Chrome"><svg width="20" height="20"><circle cx="10" cy="10" r="9" fill="#e0402f"/><path d="M2.200 5.500A9 9 0 0 0 10 19l4-7H6z" fill="#2fa24b"/><path d="M10 19a9 9 0 0 0 8-13h-8l4 6z" fill="#fbd130"/><circle cx="10" cy="10" r="4.500" fill="#fff"/><circle cx="10" cy="10" r="3.500" fill="#3d80dd"/></svg></button>
<button class="on" aria-label="Yandex"><svg width="22" height="22"><circle cx="11" cy="11" r="9.500" fill="#f2f2f2" stroke="#bbb"/><path d="M3 4q3-1 8 6 3-6 7-8l2 3q-4 3-7 9v6h-4v-6Q6 8 2 7z" fill="#e2101c"/></svg></button>
<button class="on" aria-label="WinRAR"><svg width="22" height="20"><path d="M1 3l3-2h17v5l-2 1H1z" fill="#a02a55"/><path d="M1 8l2-1h18v5H1z" fill="#2c49b8"/><path d="M1 13h20v5H2z" fill="#2a8a3a"/><path d="M3 4.500h17M3 10h17M3 15.500h17" stroke="#f0ead0"/><path d="M10 0h4v19h-4z" fill="#8a5a20"/><path d="M9 7h6v5H9z" fill="#e2c04a" stroke="#553"/></svg></button>
<button class="act" aria-label="Writer"><svg width="20" height="22"><path d="M3 2h10l4 4v14H3z" fill="#fff" stroke="#14587c" stroke-width="2"/><path d="M12 0h7v7z" fill="#14587c"/><path d="M6 7h5M6 10h8M6 13h3M6 16h8" stroke="#14587c"/><path d="M10 11h5v3h-5z" fill="#3f8ab4"/></svg></button></nav>
<div class="tray"><span>EN</span><span class="up"></span><svg-icon name="kasp"></svg-icon><svg-icon name="sound"></svg-icon><svg-icon name="net"></svg-icon><time>17:17<br>29.10.2014</time><span class="desk"></span></div>`);

const tools = s => s.trim().split(/\s+/).map(k =>
  k === 'v' ? '<drop-arrow></drop-arrow>' : k === '|' ? '<bar-gap></bar-gap>' :
  k.startsWith('*') ? `<tool-button on icon="${k.slice(1)}"></tool-button>` : `<tool-button icon="${k}"></tool-button>`).join('');

define('writer-app', `
:host{display:flex;flex-direction:column;height:100vh}
tool-bar{flex:none;height:19px}
.t2{height:20px}
.fmt{display:flex;align-items:center;gap:5px;margin-right:5px}`,
`<title-bar></title-bar><menu-bar></menu-bar>
<tool-bar>${tools('doc v open save mail | *edit | pdf print preview | abc abc2 | cut copy paste v brush | undo v redo v | link table v draw | star gallery db para | help')}</tool-bar>
<tool-bar class="t2"><div class="fmt">${tools('styles')}<combo-box label="Стиль" value="Базовый" style="width:88px"></combo-box><combo-box label="Шрифт" value="Times New Roman" style="width:99px"></combo-box><combo-box label="Кегль" value="12" style="width:39px"></combo-box></div>${tools('bold ital under | al ac ar *aj | *ltr rtl | num bul outd ind | fcol v hcol v bcol v')}</tool-bar>
<doc-view></doc-view>
<tool-bar class="end">${tools('table v | brd v fill v | merge v bcol v | split opt opt2 v *top mid bot | irow icol drow dcol | auto props | sort | sum')}</tool-bar>
<status-bar></status-bar><task-bar></task-bar>`);
</script>
</body>
</html>
